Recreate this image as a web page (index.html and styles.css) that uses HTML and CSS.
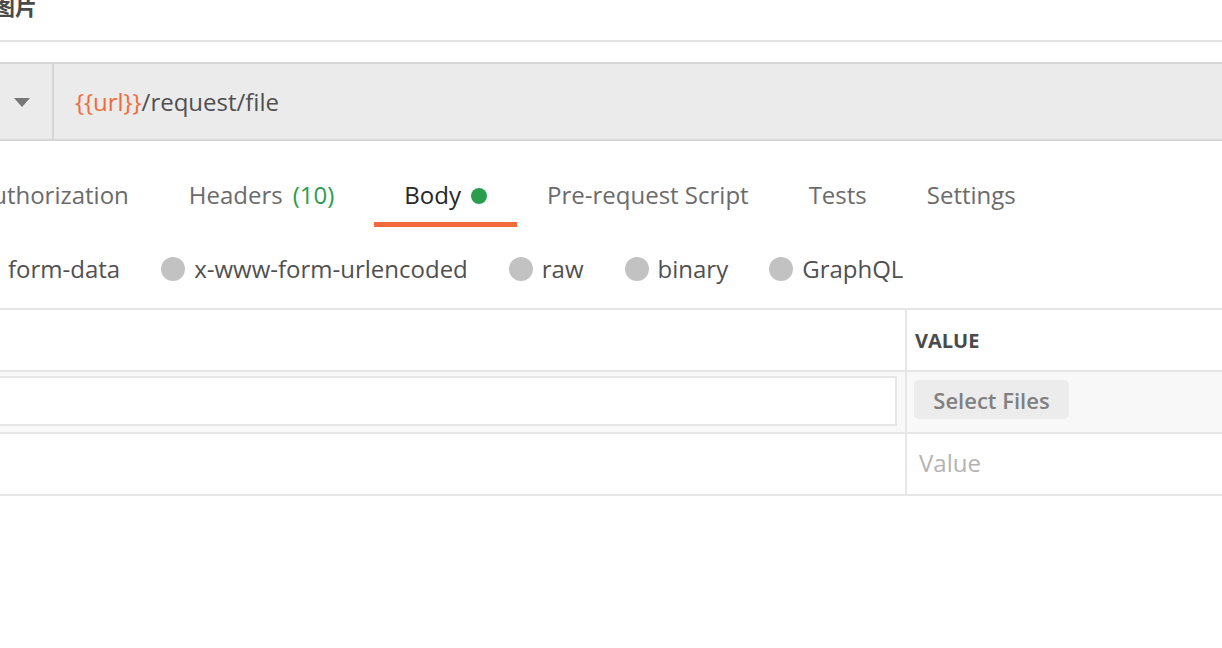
FILE: index.html
```html
<!DOCTYPE html>
<html>
<head>
<meta charset="utf-8">
<link rel="stylesheet" href="styles.css">
</head>
<body>
<div class="page">
  <div class="title"><span class="title-text">图片</span></div>
  <div class="urlbar">
    <div class="method"><span class="caret"></span></div>
    <div class="url"><span class="var">{{url}}</span>/request/file</div>
  </div>
  <div class="tabs">
    <div class="tab">Authorization</div>
    <div class="tab tab-headers">Headers <span class="count">(10)</span></div>
    <div class="tab active">Body <span class="dot"></span></div>
    <div class="tab">Pre-request Script</div>
    <div class="tab">Tests</div>
    <div class="tab">Settings</div>
  </div>
  <div class="radios">
    <div class="radio"><span class="circle"></span><span>form-data</span></div>
    <div class="radio"><span class="circle"></span><span>x-www-form-urlencoded</span></div>
    <div class="radio"><span class="circle"></span><span>raw</span></div>
    <div class="radio"><span class="circle"></span><span>binary</span></div>
    <div class="radio"><span class="circle"></span><span>GraphQL</span></div>
  </div>
  <div class="table">
    <div class="row head">
      <div class="cell key"></div>
      <div class="cell val"><span class="th">VALUE</span></div>
    </div>
    <div class="row hover">
      <div class="cell key"><div class="input"></div></div>
      <div class="cell val"><div class="btn">Select Files</div></div>
    </div>
    <div class="row">
      <div class="cell key"></div>
      <div class="cell val"><span class="placeholder">Value</span></div>
    </div>
  </div>
</div>
</body>
</html>
```

FILE: styles.css
```css
html, body {
  margin: 0;
  padding: 0;
  background: #ffffff;
}
body {
  width: 1222px;
  height: 648px;
  overflow: hidden;
  font-family: "Open Sans", "Noto Sans CJK SC", sans-serif;
  color: #505050;
}
.page {
  display: flex;
  flex-direction: column;
}
.title {
  height: 40px;
  border-bottom: 2px solid #e2e2e2;
  overflow: hidden;
}
.title-text {
  display: block;
  margin-top: -6px;
  margin-left: -7px;
  font-size: 22px;
  line-height: 22px;
  font-weight: 700;
  color: #4a4a4a;
  font-family: "Noto Sans CJK SC", "Open Sans", sans-serif;
}
.urlbar {
  margin-top: 20px;
  height: 75px;
  display: flex;
  background: #ebebeb;
  border-top: 2px solid #d6d6d6;
  border-bottom: 2px solid #d6d6d6;
}
.method {
  width: 54px;
  border-right: 2px solid #d6d6d6;
  display: flex;
  align-items: center;
  padding-left: 14px;
  box-sizing: border-box;
}
.caret {
  width: 0;
  height: 0;
  border-left: 8px solid transparent;
  border-right: 8px solid transparent;
  border-top: 9px solid #777777;
  margin-top: 2px;
}
.url {
  display: flex;
  align-items: center;
  padding-left: 21px;
  font-size: 24px;
  color: #505050;
  padding-bottom: 1px;
}
.var {
  color: #f26b3a;
}
.tabs {
  display: flex;
  margin-top: 21px;
  margin-left: -23px;
  height: 65px;
}
.tab {
  padding: 16px 30px 10px 30px;
  line-height: 34px;
  font-size: 24px;
  color: #6b6b6b;
  border-bottom: 5px solid transparent;
  white-space: nowrap;
  display: flex;
  align-items: center;
}
.tab:first-child {
  padding-left: 0;
}
.tab-headers {
  margin-right: 10px;
}
.count {
  color: #2a9d4f;
  margin-left: 10px;
}
.tab.active {
  color: #262626;
  border-bottom-color: #f26b3a;
  padding-left: 30px;
  padding-right: 30px;
}
.dot {
  width: 16px;
  height: 16px;
  border-radius: 50%;
  background: #2a9d4f;
  margin-left: 10px;
  margin-top: 2px;
}
.radios {
  display: flex;
  margin-top: 25px;
  margin-left: -25px;
  height: 34px;
  align-items: center;
}
.radio {
  display: flex;
  align-items: center;
  font-size: 24px;
  line-height: 34px;
  color: #505050;
  margin-right: 41px;
}
.circle {
  width: 24px;
  height: 24px;
  border-radius: 50%;
  background: #c2c2c2;
  margin-right: 9px;
}
.table {
  margin-top: 22px;
  border-top: 2px solid #e6e6e6;
}
.row {
  display: flex;
  height: 60px;
  border-bottom: 2px solid #e6e6e6;
}
.row.hover {
  background: #f8f8f8;
}
.cell.key {
  border-right: 2px solid #e6e6e6;
  box-sizing: border-box;
  width: 907px;
  padding: 4px 8px 6px 0;
  display: flex;
}
.cell.val {
  flex: 1;
  display: flex;
  align-items: center;
  padding-left: 8px;
}
.th {
  font-size: 20px;
  font-weight: 700;
  color: #4a4a4a;
  margin-top: 1px;
}
.input {
  flex: 1;
  background: #ffffff;
  border: 2px solid #e6e6e6;
  border-left: none;
}
.row.hover .cell.val {
  align-items: flex-start;
  padding-left: 7px;
}
.btn {
  margin-top: 8px;
  height: 39px;
  width: 155px;
  box-sizing: border-box;
  background: #ececec;
  border-radius: 5px;
  display: flex;
  align-items: center;
  justify-content: center;
  font-size: 22px;
  font-weight: 600;
  color: #808080;
}
.placeholder {
  font-size: 24px;
  color: #b3b3b3;
  padding-left: 4px;
  margin-top: -4px;
}
```
